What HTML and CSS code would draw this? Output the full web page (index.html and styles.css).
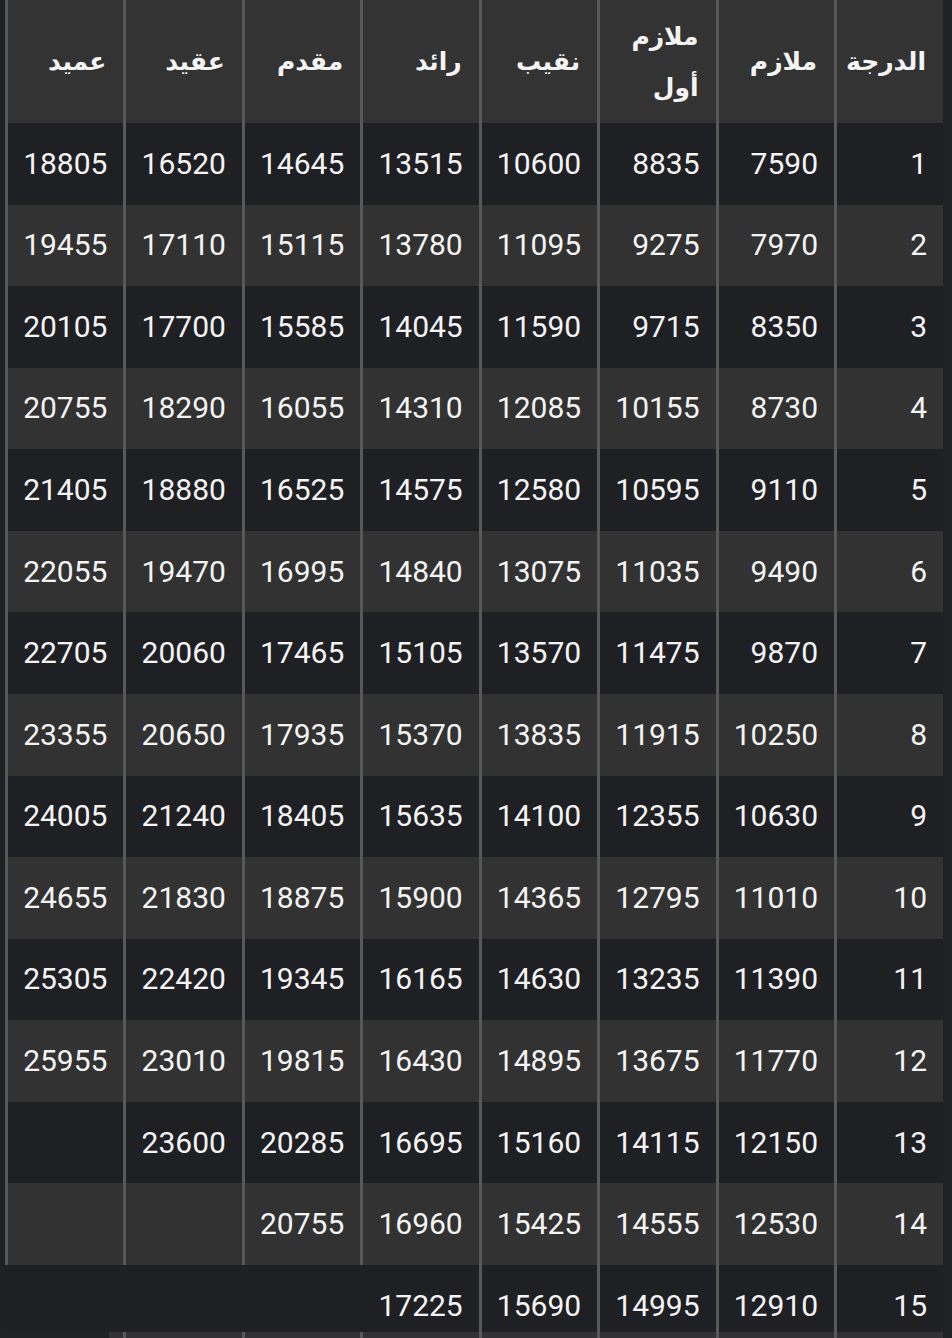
FILE: index.html
```html
<!DOCTYPE html>
<html lang="ar" dir="rtl">
<head>
<meta charset="utf-8">
<title>جدول الرواتب</title>
<link rel="stylesheet" href="styles.css">
</head>
<body>
<div class="table">
  <div class="row head">
    <div class="cell">الدرجة</div>
    <div class="cell">ملازم</div>
    <div class="cell">ملازم<br>أول</div>
    <div class="cell">نقيب</div>
    <div class="cell">رائد</div>
    <div class="cell">مقدم</div>
    <div class="cell">عقيد</div>
    <div class="cell">عميد</div>
  </div>
  <div class="row dark"><div class="cell">1</div><div class="cell">7590</div><div class="cell">8835</div><div class="cell">10600</div><div class="cell">13515</div><div class="cell">14645</div><div class="cell">16520</div><div class="cell">18805</div></div>
  <div class="row light"><div class="cell">2</div><div class="cell">7970</div><div class="cell">9275</div><div class="cell">11095</div><div class="cell">13780</div><div class="cell">15115</div><div class="cell">17110</div><div class="cell">19455</div></div>
  <div class="row dark"><div class="cell">3</div><div class="cell">8350</div><div class="cell">9715</div><div class="cell">11590</div><div class="cell">14045</div><div class="cell">15585</div><div class="cell">17700</div><div class="cell">20105</div></div>
  <div class="row light"><div class="cell">4</div><div class="cell">8730</div><div class="cell">10155</div><div class="cell">12085</div><div class="cell">14310</div><div class="cell">16055</div><div class="cell">18290</div><div class="cell">20755</div></div>
  <div class="row dark"><div class="cell">5</div><div class="cell">9110</div><div class="cell">10595</div><div class="cell">12580</div><div class="cell">14575</div><div class="cell">16525</div><div class="cell">18880</div><div class="cell">21405</div></div>
  <div class="row light"><div class="cell">6</div><div class="cell">9490</div><div class="cell">11035</div><div class="cell">13075</div><div class="cell">14840</div><div class="cell">16995</div><div class="cell">19470</div><div class="cell">22055</div></div>
  <div class="row dark"><div class="cell">7</div><div class="cell">9870</div><div class="cell">11475</div><div class="cell">13570</div><div class="cell">15105</div><div class="cell">17465</div><div class="cell">20060</div><div class="cell">22705</div></div>
  <div class="row light"><div class="cell">8</div><div class="cell">10250</div><div class="cell">11915</div><div class="cell">13835</div><div class="cell">15370</div><div class="cell">17935</div><div class="cell">20650</div><div class="cell">23355</div></div>
  <div class="row dark"><div class="cell">9</div><div class="cell">10630</div><div class="cell">12355</div><div class="cell">14100</div><div class="cell">15635</div><div class="cell">18405</div><div class="cell">21240</div><div class="cell">24005</div></div>
  <div class="row light"><div class="cell">10</div><div class="cell">11010</div><div class="cell">12795</div><div class="cell">14365</div><div class="cell">15900</div><div class="cell">18875</div><div class="cell">21830</div><div class="cell">24655</div></div>
  <div class="row dark"><div class="cell">11</div><div class="cell">11390</div><div class="cell">13235</div><div class="cell">14630</div><div class="cell">16165</div><div class="cell">19345</div><div class="cell">22420</div><div class="cell">25305</div></div>
  <div class="row light"><div class="cell">12</div><div class="cell">11770</div><div class="cell">13675</div><div class="cell">14895</div><div class="cell">16430</div><div class="cell">19815</div><div class="cell">23010</div><div class="cell">25955</div></div>
  <div class="row dark"><div class="cell">13</div><div class="cell">12150</div><div class="cell">14115</div><div class="cell">15160</div><div class="cell">16695</div><div class="cell">20285</div><div class="cell">23600</div><div class="cell"></div></div>
  <div class="row light"><div class="cell">14</div><div class="cell">12530</div><div class="cell">14555</div><div class="cell">15425</div><div class="cell">16960</div><div class="cell">20755</div><div class="cell"></div><div class="cell"></div></div>
  <div class="row dark last"><div class="cell">15</div><div class="cell">12910</div><div class="cell">14995</div><div class="cell">15690</div><div class="cell span4">17225</div></div>
  <div class="row light peek"><div class="cell"></div><div class="cell"></div><div class="cell"></div><div class="cell"></div><div class="cell"></div><div class="cell"></div><div class="cell"></div><div class="cell edge"></div></div>
</div>
</body>
</html>
```

FILE: styles.css
```css
html, body {
  margin: 0;
  padding: 0;
  background: #202125;
  height: 1338px;
  overflow: hidden;
}

.table {
  width: 938px;
  margin-left: 5px;
  margin-right: 9px;
  direction: rtl;
  font-family: Roboto, "DejaVu Sans", sans-serif;
  color: #f4f4f4;
}

.row {
  display: grid;
  grid-template-columns: 109px repeat(7, 1fr);
  height: 81.57px;
}

.cell {
  border-left: 3px solid #585858;
  display: flex;
  align-items: center;
  justify-content: flex-start;
  padding-right: 16px;
  font-size: 30px;
  line-height: 36px;
  white-space: nowrap;
}

.head {
  height: 123px;
  background: #333333;
}

.head .cell {
  font-family: "DejaVu Sans", Roboto, sans-serif;
  font-size: 25px;
  font-weight: bold;
  line-height: 51px;
  padding-right: 17px;
}

.dark { background: #1f2024; }
.light { background: #323232; }

.last {
  height: 67px;
}

.last .cell {
  align-items: flex-start;
  padding-top: 23px;
}

.last .span4 {
  grid-column: span 4;
  border-left: none;
}

.peek {
  height: 6px;
}

.peek .cell.edge {
  background: linear-gradient(to right, #202125 0, #202125 101px, #323232 101px);
  border-left-color: #202125;
}
```
